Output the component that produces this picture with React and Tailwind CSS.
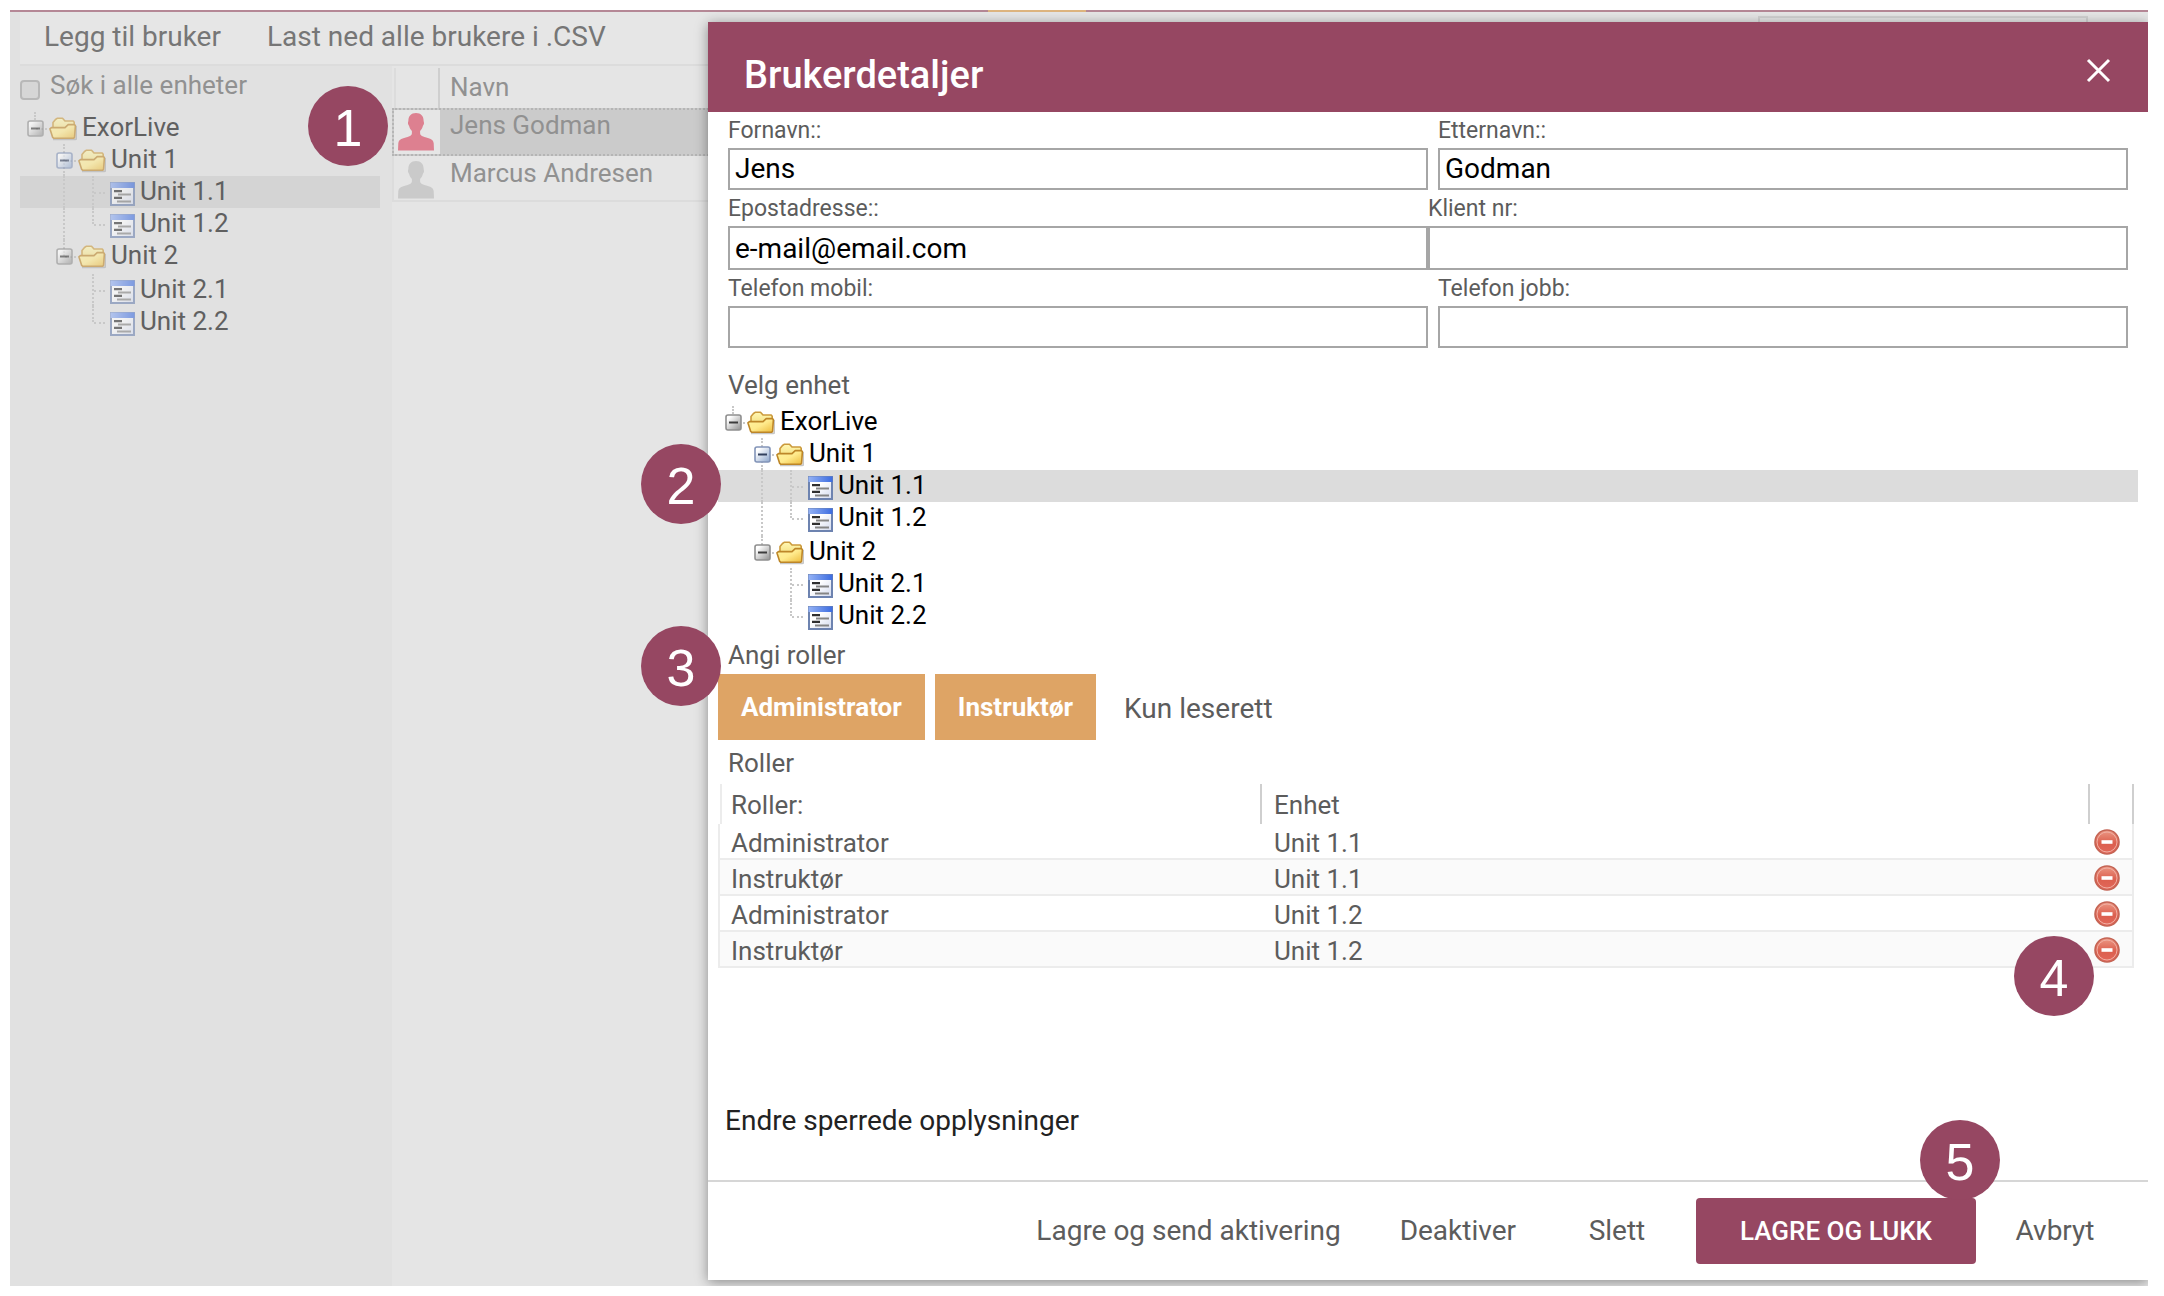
import React from "react";

const UNITS = [
  { label: "ExorLive", level: 0, kind: "folder" },
  { label: "Unit 1", level: 1, kind: "folder", blue: true },
  { label: "Unit 1.1", level: 2, kind: "unit", trunk: true, selected: true },
  { label: "Unit 1.2", level: 2, kind: "unit", trunk: true, last: true },
  { label: "Unit 2", level: 1, kind: "folder", last: true },
  { label: "Unit 2.1", level: 2, kind: "unit" },
  { label: "Unit 2.2", level: 2, kind: "unit", last: true },
];

const ROLES = [
  ["Administrator", "Unit 1.1"],
  ["Instruktør", "Unit 1.1"],
  ["Administrator", "Unit 1.2"],
  ["Instruktør", "Unit 1.2"],
];

function IconDefs() {
  return (
    <svg width="0" height="0" className="absolute" aria-hidden="true">
      <defs>
        <linearGradient id="expGray" x1="0" y1="0" x2="1" y2="1">
          <stop offset="0.2" stopColor="#ffffff" />
          <stop offset="1" stopColor="#8f8f8f" />
        </linearGradient>
        <linearGradient id="expBlue" x1="0" y1="0" x2="1" y2="1">
          <stop offset="0.2" stopColor="#ffffff" />
          <stop offset="1" stopColor="#8ba5cc" />
        </linearGradient>
        <linearGradient id="folderBack" x1="0" y1="0" x2="0" y2="1">
          <stop offset="0" stopColor="#fff8b4" />
          <stop offset="1" stopColor="#efd062" />
        </linearGradient>
        <linearGradient id="folderFront" x1="0" y1="0" x2="1" y2="1">
          <stop offset="0" stopColor="#fff3a0" />
          <stop offset="0.5" stopColor="#ffea8c" />
          <stop offset="1" stopColor="#ecbb3c" />
        </linearGradient>
        <linearGradient id="unitHead" x1="0" y1="0" x2="1" y2="0">
          <stop offset="0" stopColor="#94b2f5" />
          <stop offset="1" stopColor="#3c6ce0" />
        </linearGradient>
        <linearGradient id="unitBody" x1="0" y1="0" x2="1" y2="1">
          <stop offset="0.4" stopColor="#ffffff" />
          <stop offset="1" stopColor="#d3daee" />
        </linearGradient>
        <linearGradient id="removeRed" x1="0" y1="0" x2="0" y2="1">
          <stop offset="0" stopColor="#ec9a86" />
          <stop offset="0.55" stopColor="#dc5f4e" />
          <stop offset="1" stopColor="#e2685b" />
        </linearGradient>
      </defs>
    </svg>
  );
}

function Expander({ blue }) {
  return (
    <svg width="17" height="17" viewBox="0 0 17 17" aria-hidden="true">
      <rect x="1" y="1" width="15" height="15" rx="2" fill={blue ? "url(#expBlue)" : "url(#expGray)"} stroke={blue ? "#8294b8" : "#8f8f8f"} strokeWidth="1.6" />
      <path d="M4 8.5h9" stroke={blue ? "#33415e" : "#3c3c3c"} strokeWidth="2" />
    </svg>
  );
}

function FolderIcon() {
  return (
    <svg width="28" height="24" viewBox="0 0 28 24" aria-hidden="true">
      <path d="M4 22.4h22.200c1 0 1.400-.6 1.400-1.600V9" fill="none" stroke="#000" strokeOpacity="0.22" strokeWidth="1.800" />
      <path d="M4 20V5.500L6.500 2.500 8.500 1.200h5L16 4h8.200l1 1.200V20z" fill="url(#folderBack)" stroke="#cb9a3c" strokeWidth="1.600" strokeLinejoin="round" />
      <path d="M.9 11.800 2.400 10.600H16l3.200-3h6.200l1 1-.8 11.800-.9.8H4.600l-.9-.8z" fill="url(#folderFront)" stroke="#bd8628" strokeWidth="1.600" strokeLinejoin="round" />
    </svg>
  );
}

function UnitIcon() {
  return (
    <svg width="25" height="24" viewBox="0 0 25 24" aria-hidden="true">
      <rect x="1" y="1" width="23" height="22" fill="url(#unitBody)" stroke="#6d83b0" strokeWidth="2" />
      <rect x="0.5" y="0.5" width="24" height="5.5" fill="url(#unitHead)" />
      <path d="M4 9.200h8M4 15.800h8" stroke="#2f2f2f" strokeWidth="2.200" />
      <path d="M8 12.500h13M7 19.400h14" stroke="#858585" strokeWidth="2" />
    </svg>
  );
}

function PersonIcon({ className }) {
  return (
    <svg width="36" height="38" viewBox="0 0 36 38" className={className} fill="currentColor" aria-hidden="true">
      <path d="M18 0c5 0 7.600 3.200 7.600 7.600 0 1 .5 1.600.4 3-.1 1.200-.9 1.600-1.200 2.700-.5 2-1.600 3.700-2.700 4.800v2.200c0 2 1.400 2.700 4.400 3.600 4.800 1.400 8.600 1.700 9.200 6.300l.3 7.300H0l.3-7.300c.6-4.600 4.400-4.900 9.200-6.300 3-.9 4.400-1.600 4.400-3.600v-2.200c-1.100-1.100-2.200-2.800-2.700-4.800-.3-1.100-1.100-1.500-1.200-2.700-.1-1.400.4-2 .4-3C10.400 3.200 13 0 18 0z" />
    </svg>
  );
}

function RemoveIcon() {
  return (
    <svg width="26" height="26" viewBox="0 0 26 26" aria-hidden="true">
      <circle cx="13" cy="13" r="12" fill="url(#removeRed)" stroke="#c46454" strokeWidth="1.600" />
      <circle cx="13" cy="13" r="10" fill="none" stroke="#f0b0a4" strokeWidth="1" />
      <rect x="7.500" y="11.200" width="11" height="3.600" fill="#fff" />
    </svg>
  );
}

function Dots({ className }) {
  return <span className={"absolute border-dotted border-[#c8c8c8] " + className} />;
}

function TreeRow({ node, selectedClass, tall }) {
  const { label, level, kind, blue, last, trunk, selected } = node;
  return (
    <li
      role="treeitem"
      aria-selected={!!selected}
      className={
        "flex pl-px text-[26px] leading-[30px] " + (tall ? "h-[34px] " : "h-8 ") + (selected ? selectedClass : "")
      }
    >
      {level > 0 && <span className="w-[29px]" />}
      {level > 1 && (
        <span className="relative w-[29px]">{trunk && <Dots className="inset-y-0 left-[13px] border-l-2" />}</span>
      )}
      <span className="relative w-7">
        {level === 0 && <Dots className="top-0 left-[13px] h-2 border-l-2" />}
        {level > 0 && <Dots className={"top-0 left-[13px] border-l-2 " + (last ? "h-4" : "h-full")} />}
        <Dots className="top-4 right-0.5 left-[15px] border-t-2" />
        {kind === "folder" && (
          <span className="absolute top-2 left-1.5">
            <Expander blue={blue} />
          </span>
        )}
      </span>
      <span className={kind === "folder" ? "w-[33px] pt-[5px]" : "w-[33px] pt-1.5 pl-[3px]"}>
        {kind === "folder" ? <FolderIcon /> : <UnitIcon />}
      </span>
      <span>{label}</span>
    </li>
  );
}

function UnitTree({ className, selectedClass, name, tallRow }) {
  return (
    <ul role="tree" aria-label={name} className={className}>
      {UNITS.map((node) => (
        <TreeRow key={node.label} node={node} selectedClass={selectedClass} tall={node.label === tallRow} />
      ))}
    </ul>
  );
}

function Badge({ n, className }) {
  return (
    <span
      className={
        "absolute z-10 flex size-20 items-center justify-center rounded-full bg-[#964762] pt-1 font-['Liberation_Sans',sans-serif] text-[52px] leading-none text-white " +
        className
      }
    >
      {n}
    </span>
  );
}

function Field({ id, label, value = "", className = "", inputClass = "h-[42px]", type = "text" }) {
  return (
    <div className={"flex flex-col " + className}>
      <label htmlFor={id} className="pt-0.5 text-[23px] leading-[34px] text-[#5c5c5c]">
        {label}
      </label>
      <input
        id={id}
        type={type}
        defaultValue={value}
        className={"w-full border-2 border-[#a6a6a6] bg-white px-[5px] text-[28px] text-black outline-none " + inputClass}
      />
    </div>
  );
}

function Toolbar() {
  return (
    <div className="ml-2.5 flex h-[54px] items-start border-b-2 border-[#dcdcdc] bg-[#e6e6e6] text-[28px] leading-[50px] text-[#767676]">
      <button type="button" className="ml-6">Legg til bruker</button>
      <button type="button" className="ml-[46px]">Last ned alle brukere i .CSV</button>
      <input
        aria-label="Søk"
        className="mt-1 mr-15 ml-auto h-10 w-[330px] border-2 border-[#d2d2d2] bg-[#e6e6e6]"
      />
    </div>
  );
}

function UserGrid() {
  return (
    <section className="flex-1 bg-[#e5e5e5] pt-0.5 text-[26px] text-[#919191]">
      <div className="flex h-10 pl-0.5 leading-[38px]">
        <span className="w-[46px] border-r-2 border-l-2 border-r-[#cfcfcf] border-l-[#dcdcdc]" />
        <span className="pl-2.5">Navn</span>
      </div>
      <div className="flex h-12 border-2 border-dotted border-[#b5b5b5] bg-[#cbcbcb]">
        <span className="w-[46px] bg-[#e6e6e6] pt-[3px] pl-1">
          <PersonIcon className="text-[#dd8090]" />
        </span>
        <span className="pl-2.5 leading-[30px]">Jens Godman</span>
      </div>
      <div className="flex h-[46px] border-b-2 border-l-2 border-[#dcdcdc]">
        <span className="w-[46px] pt-[5px] pl-1">
          <PersonIcon className="text-[#cacaca]" />
        </span>
        <span className="pl-2.5 leading-[34px]">Marcus Andresen</span>
      </div>
    </section>
  );
}

function UnitPanel() {
  return (
    <aside className="w-[382px] bg-[#e1e1e1] pr-3 pl-2.5">
      <label className="flex h-[46px] items-start text-[26px] leading-[38px] text-[#919191]">
        <input
          type="checkbox"
          className="mt-[14px] mr-2.5 size-5 appearance-none rounded border-2 border-[#b8b8b8] bg-[#d6d6d6]"
        />
        Søk i alle enheter
      </label>
      <div className="text-[#606060] [&_svg]:opacity-60">
        <UnitTree name="Enheter" selectedClass="bg-[#d4d4d4]" tallRow="Unit 2" />
      </div>
    </aside>
  );
}

function RolesTable() {
  return (
    <table className="mt-1 w-[calc(100%-14px)] table-fixed border-separate border-spacing-0 text-left text-[26px] leading-[30px] text-[#5c5c5c]">
      <thead>
        <tr className="h-10">
          <th className="w-[542px] pt-1 pl-0.5 font-normal">
            <span className="-mt-1 block border-l-2 border-[#ececec] pt-1.5 pb-1 pl-[9px]">Roller:</span>
          </th>
          <th className="border-l-2 border-[#cfcfcf] pt-0.5 pl-3 font-normal">Enhet</th>
          <th className="w-[46px] border-r-2 border-l-2 border-[#cfcfcf]" aria-label="Fjern" />
        </tr>
      </thead>
      <tbody>
        {ROLES.map(([role, unit], i) => (
          <tr key={i} className="h-9 even:bg-[#fafafa]">
            <td className="border-b-2 border-l-2 border-[#ececec] pt-1 pl-[11px]">{role}</td>
            <td className="border-b-2 border-[#ececec] pt-1 pl-3.5">{unit}</td>
            <td className="border-r-2 border-b-2 border-[#ececec] pl-1.5">
              <button type="button" aria-label={"Fjern " + role + " " + unit} className="mt-0.5 block">
                <RemoveIcon />
              </button>
            </td>
          </tr>
        ))}
      </tbody>
    </table>
  );
}

function UserDialog() {
  const action = "min-w-32 px-[22px]";
  return (
    <section
      role="dialog"
      aria-labelledby="dialog-title"
      className="absolute top-3 right-0 bottom-1.5 left-[698px] flex flex-col bg-white shadow-[0_2px_12px_rgba(0,0,0,0.4)]"
    >
      <header className="flex h-[90px] items-start justify-between bg-[#964762] pr-[37px] pl-9 text-white">
        <h1 id="dialog-title" className="pt-2 text-[38px] leading-[90px] font-medium">Brukerdetaljer</h1>
        <button type="button" aria-label="Lukk" className="mt-9">
          <svg width="25" height="25" viewBox="0 0 25 25" stroke="currentColor" strokeWidth="3" aria-hidden="true">
            <path d="M2 2l21 21M23 2L2 23" />
          </svg>
        </button>
      </header>

      <div className="flex flex-1 flex-col pl-2.5">
        <form className="pr-5 pl-2.5">
          <div className="flex">
            <Field id="fornavn" label="Fornavn::" value="Jens" className="w-1/2" />
            <Field id="etternavn" label="Etternavn::" value="Godman" className="w-1/2 pl-2.5" />
          </div>
          <div className="flex">
            <Field id="epost" label="Epostadresse::" value="e-mail@email.com" className="w-1/2" inputClass="h-11" />
            <Field id="klient" label="Klient nr:" className="w-1/2" inputClass="h-11" />
          </div>
          <div className="flex">
            <Field id="mobil" label="Telefon mobil:" type="tel" className="w-1/2" />
            <Field id="jobb" label="Telefon jobb:" type="tel" className="w-1/2 pl-2.5" />
          </div>
        </form>

        <h2 className="mt-5 pl-2.5 text-[26px] leading-[34px] text-[#5c5c5c]">Velg enhet</h2>
        <UnitTree
          name="Velg enhet"
          className="mt-1 mr-2.5 text-black"
          selectedClass="bg-[#dcdcdc]"
          tallRow="Unit 1.2"
        />

        <h2 className="mt-1.5 pl-2.5 text-[26px] leading-[34px] text-[#5c5c5c]">Angi roller</h2>
        <div className="mt-0.5 flex h-[66px] gap-2.5 text-[26px]">
          <button type="button" className="bg-[#dea465] px-[23px] font-bold text-white">Administrator</button>
          <button type="button" className="bg-[#dea465] px-[23px] font-bold text-white">Instruktør</button>
          <button type="button" className="pt-1 pl-[18px] text-[28px] text-[#5c5c5c]">Kun leserett</button>
        </div>

        <h2 className="mt-1.5 pl-2.5 text-[26px] leading-[34px] text-[#5c5c5c]">Roller</h2>
        <RolesTable />

        <button type="button" className="mt-auto mb-[39px] self-start pl-[7px] text-[28px] leading-10 text-[#222222]">
          Endre sperrede opplysninger
        </button>
      </div>

      <footer className="flex h-[100px] items-center justify-end gap-[15px] border-t-2 border-[#d6d6d6] pr-[29px] text-[28px] text-[#5c5c5c]">
        <button type="button" className={action}>Lagre og send aktivering</button>
        <button type="button" className={action}>Deaktiver</button>
        <button type="button" className={action}>Slett</button>
        <button type="button" className="h-[66px] rounded bg-[#964762] px-11 text-[26px] font-medium text-white">
          LAGRE OG LUKK
        </button>
        <button type="button" className={action}>Avbryt</button>
      </footer>

      <Badge n="2" className="top-[422px] -left-[67px]" />
      <Badge n="3" className="top-[604px] -left-[67px]" />
      <Badge n="4" className="top-[914px] right-[54px]" />
      <Badge n="5" className="right-[148px] bottom-20" />
    </section>
  );
}

export default function App() {
  return (
    <div className="flex min-h-screen flex-col bg-white pt-2.5 pr-4 pb-2.5 pl-2.5 font-[Roboto,sans-serif]">
      <IconDefs />
      <main className="relative flex min-h-[1240px] flex-1 flex-col overflow-hidden bg-[#e1e1e1]">
        <div className="flex h-0.5 bg-[#b58896]">
          <span className="ml-[978px] w-[98px] bg-[#deb57f]" />
        </div>
        <Toolbar />
        <div className="flex flex-1">
          <UnitPanel />
          <UserGrid />
        </div>
        <Badge n="1" className="top-[76px] left-[298px]" />
        <UserDialog />
      </main>
    </div>
  );
}
